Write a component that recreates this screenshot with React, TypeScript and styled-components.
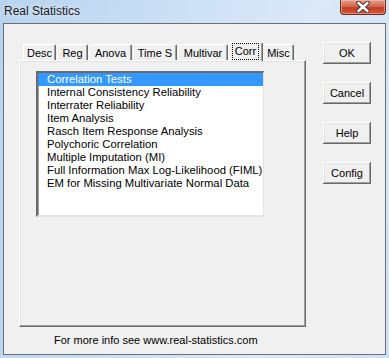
import React from 'react';
import styled, {createGlobalStyle} from "styled-components";

const GlobalStyle = createGlobalStyle`
    html, body {
        margin: 0;
        padding: 0;
        background: #d6e6f6;
    }
    * {
        box-sizing: border-box;
    }
`

const tabs = [
    {label: "Desc", width: 33},
    {label: "Reg", width: 31},
    {label: "Anova", width: 43},
    {label: "Time S", width: 44},
    {label: "Multivar", width: 50},
    {label: "Corr", width: 35, active: true},
    {label: "Misc", width: 31},
]

const items = [
    "Correlation Tests",
    "Internal Consistency Reliability",
    "Interrater Reliability",
    "Item Analysis",
    "Rasch Item Response Analysis",
    "Polychoric Correlation",
    "Multiple Imputation (MI)",
    "Full Information Max Log-Likelihood (FIML)",
    "EM for Missing Multivariate Normal Data",
]

const buttons = ["OK", "Cancel", "Help", "Config"]

const App = () => {
    return (
        <>
            <GlobalStyle/>
            <Window>
                <TitleBar>
                    <Title>Real Statistics</Title>
                    <CloseButton>
                        <svg width="16" height="12" viewBox="0 0 16 12">
                            <path d="M3.5 2 L12.5 10 M12.5 2 L3.5 10" stroke="#4a2a2a" strokeWidth="4.4"
                                  strokeLinecap="round"/>
                            <path d="M3.5 2 L12.5 10 M12.5 2 L3.5 10" stroke="#ffffff" strokeWidth="2.6"
                                  strokeLinecap="round"/>
                        </svg>
                    </CloseButton>
                </TitleBar>
                <Client>
                    <LeftColumn>
                        <TabStrip>
                            {tabs.map(t => (
                                <Tab key={t.label} $width={t.width} $active={!!t.active}>
                                    {t.active ? <Focus>{t.label}</Focus> : t.label}
                                </Tab>
                            ))}
                        </TabStrip>
                        <TabPage>
                            <ListBox>
                                {items.map((item, i) => (
                                    <ListItem key={item} $selected={i === 0}>{item}</ListItem>
                                ))}
                            </ListBox>
                        </TabPage>
                        <Footer>For more info see www.real-statistics.com</Footer>
                    </LeftColumn>
                    <ButtonColumn>
                        {buttons.map(b => <Button key={b}>{b}</Button>)}
                    </ButtonColumn>
                </Client>
            </Window>
        </>
    );
};

export default App;

const Window = styled.div`
    width: 389px;
    height: 358px;
    display: flex;
    flex-direction: column;
    padding: 0 3px 3px 3px;
    background: linear-gradient(100deg, #b7d3ef 0%, #c9def4 35%, #dbe9f8 70%, #cfe2f5 100%);
    font-family: "Liberation Sans", Arial, sans-serif;
    font-size: 11px;
`

const TitleBar = styled.div`
    height: 23px;
    display: flex;
    justify-content: space-between;
    align-items: flex-start;
`

const Title = styled.div`
    padding: 4px 0 0 1px;
    font-size: 12px;
    color: #1a1a1a;
    text-shadow: 0 0 6px rgba(255, 255, 255, 0.9);
`

const CloseButton = styled.div`
    width: 46px;
    height: 15px;
    display: flex;
    align-items: center;
    justify-content: center;
    border: 1px solid #6b2a22;
    border-top: none;
    border-radius: 0 0 4px 4px;
    background: linear-gradient(to bottom, #e0a090 0%, #d4694f 45%, #c53d22 55%, #d05a3c 100%);
    box-shadow: inset 0 0 0 1px rgba(255, 200, 180, 0.5);
`

const Client = styled.div`
    flex: 1;
    display: flex;
    background: #f0f0f0;
    border: 1px solid #6a7079;
`

const LeftColumn = styled.div`
    display: flex;
    flex-direction: column;
    margin-left: 15px;
    padding-top: 18px;
    width: 287px;
`

const TabStrip = styled.div`
    height: 18px;
    display: flex;
    align-items: flex-end;
    padding-left: 4px;
    position: relative;
    z-index: 1;
`

const Tab = styled.div<{ $width: number; $active: boolean }>`
    width: ${p => p.$width}px;
    height: ${p => p.$active ? 19 : 16}px;
    margin: ${p => p.$active ? "0 0 -1px -1px" : "0 1px 0 0"};
    display: flex;
    justify-content: center;
    align-items: ${p => p.$active ? "flex-start" : "center"};
    padding-top: ${p => p.$active ? 1 : 0}px;
    background: #f0f0f0;
    color: #000;
    border-top: 1px solid #ffffff;
    border-left: 1px solid #ffffff;
    border-right: 1px solid #696969;
    box-shadow: inset -1px 0 0 #a0a0a0;
    border-radius: 2px 2px 0 0;
`

const Focus = styled.span`
    padding: 1px 2px 2px 2px;
    outline: 1px dotted #000;
    outline-offset: 0;
`

const TabPage = styled.div`
    height: 267px;
    padding: 10px 0 0 16px;
    background: #f0f0f0;
    border-top: 1px solid #ffffff;
    border-left: 1px solid #ffffff;
    border-right: 1px solid #696969;
    border-bottom: 1px solid #696969;
    box-shadow: inset -1px -1px 0 #a0a0a0, inset 1px 1px 0 #e3e3e3;
`

const ListBox = styled.div`
    width: 228px;
    height: 146px;
    background: #ffffff;
    border-top: 2px solid #6a6a6a;
    border-left: 2px solid #6a6a6a;
    border-right: 1px solid #e3e3e3;
    border-bottom: 2px solid #e3e3e3;
    box-shadow: inset 1px 1px 0 #a0a0a0;
`

const ListItem = styled.div<{ $selected: boolean }>`
    height: 13px;
    line-height: 13px;
    padding-left: 9px;
    white-space: nowrap;
    font-size: 11.3px;
    color: ${p => p.$selected ? "#ffffff" : "#000000"};
    background: ${p => p.$selected ? "#3399ff" : "transparent"};
`

const Footer = styled.div`
    padding: 7px 0 0 35px;
    color: #000;
    white-space: nowrap;
`

const ButtonColumn = styled.div`
    display: flex;
    flex-direction: column;
    gap: 18px;
    margin-left: 17px;
    padding-top: 18px;
`

const Button = styled.div`
    width: 48px;
    height: 22px;
    display: flex;
    align-items: center;
    justify-content: center;
    background: #f0f0f0;
    color: #000;
    box-shadow: inset -1px -1px 0 #696969, inset 1px 1px 0 #ffffff, inset -2px -2px 0 #a0a0a0, inset 2px 2px 0 #e3e3e3;
`
